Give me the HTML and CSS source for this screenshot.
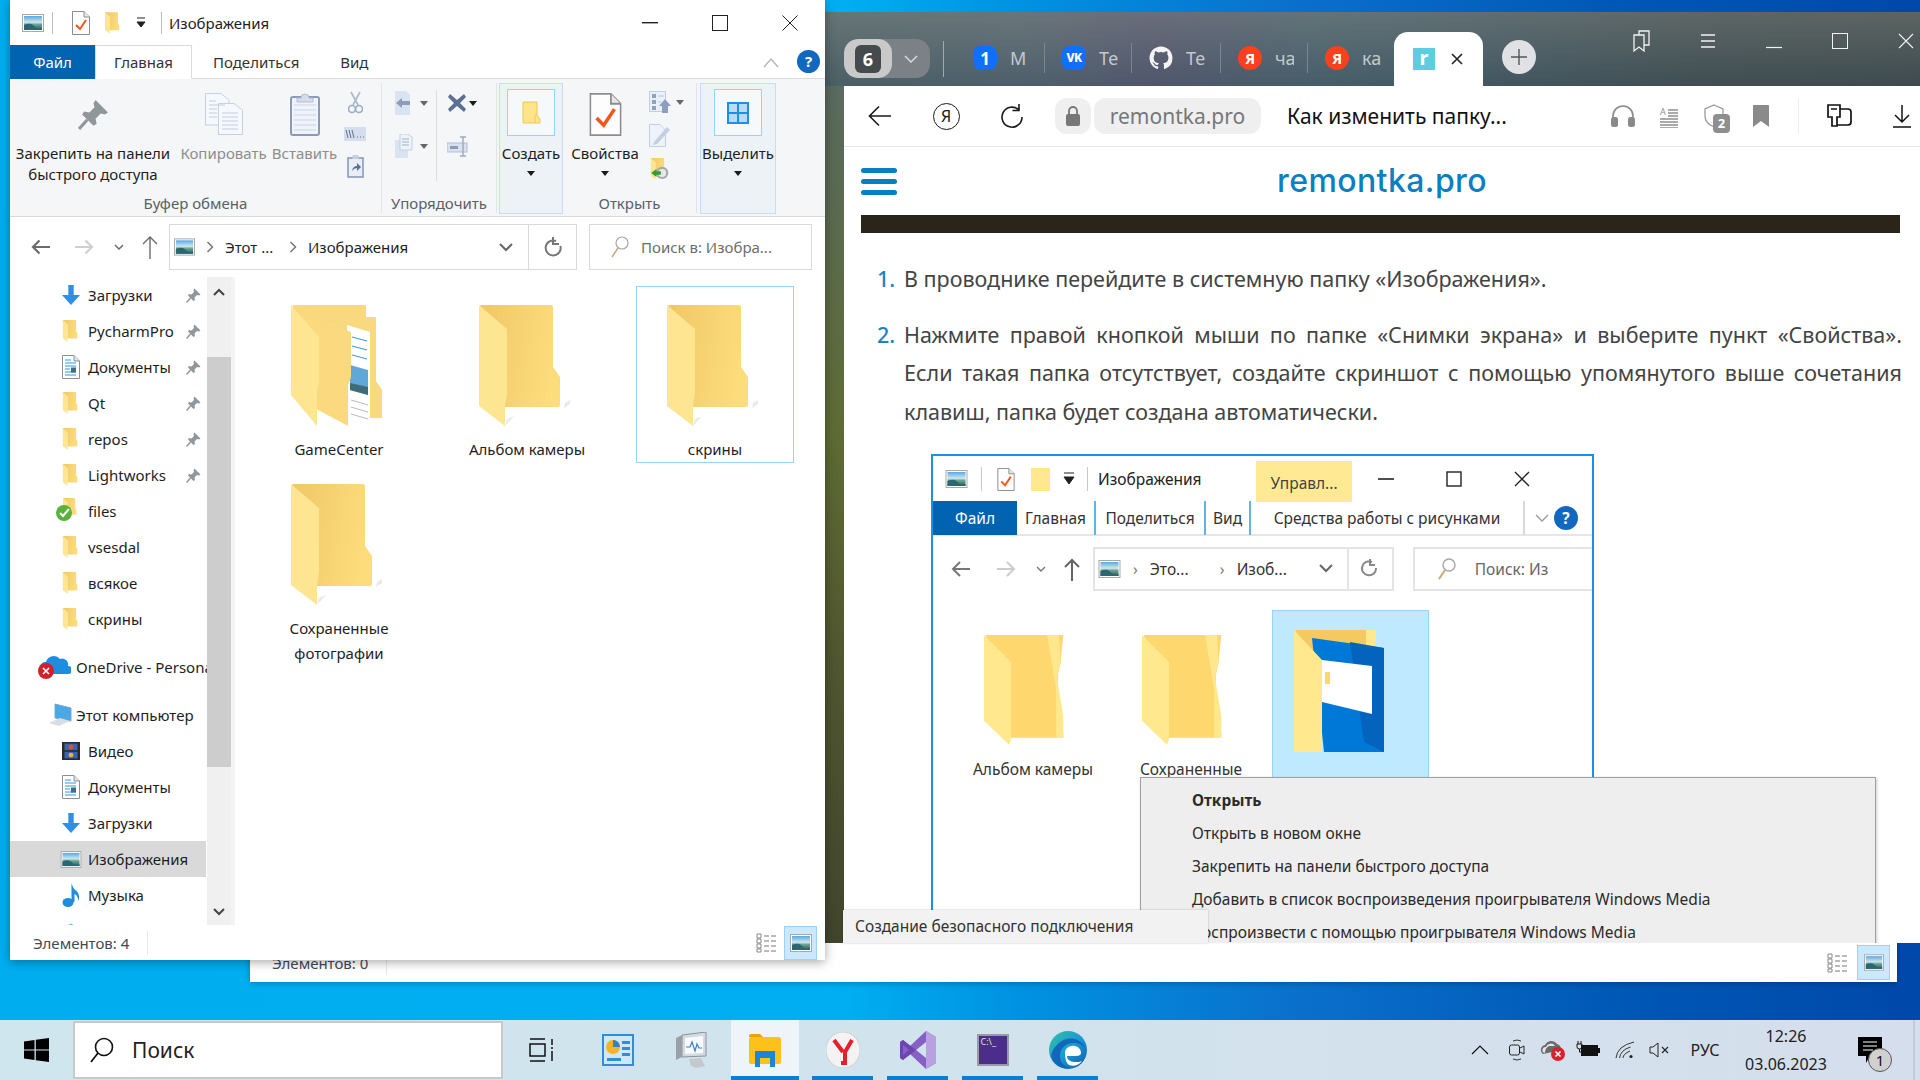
FILE: index.html
```html
<!DOCTYPE html>
<html lang="ru">
<head>
<meta charset="utf-8">
<title>Изображения</title>
<link rel="stylesheet" href="styles.css">
</head>
<body>
<svg class="defs" width="0" height="0" aria-hidden="true">
  <defs>
    <linearGradient id="gback" x1="0" y1="0" x2="1" y2="0.2"><stop offset="0" stop-color="#efc766"/><stop offset="1" stop-color="#fddc7c"/></linearGradient>
    <linearGradient id="gpic" x1="0" y1="0" x2="0" y2="1"><stop offset="0" stop-color="#5aa9e2"/><stop offset=".45" stop-color="#cfe6ee"/><stop offset=".6" stop-color="#6fa58f"/><stop offset="1" stop-color="#1f5a6b"/></linearGradient>
    <linearGradient id="gedge" x1="0" y1="0" x2="1" y2="1"><stop offset="0" stop-color="#2fc5a0"/><stop offset=".5" stop-color="#1c9ad6"/><stop offset="1" stop-color="#0c5ba8"/></linearGradient>
    <symbol id="fold" viewBox="0 0 91 122">
      <path d="M86 98l5-3v4l-6 4zM28 114l7-3-9 10z" fill="#e9e9e9"/>
      <path d="M2 0H72q2 0 2 2V62l7 10v28q0 2-2 2H26V60L0 2z" fill="url(#gback)"/>
      <path d="M0 0L28 24V88Q27 94 26 102V121L0 101z" fill="#fee591"/>
    </symbol>
    <symbol id="folddocs" viewBox="0 0 91 122">
      <path d="M2 0H74q1 0 1 2V12H84q1 0 1 2V76l6 9v28H70L2 40z" fill="#f8d97f"/>
      <path d="M56 20L79 27V119L56 112z" fill="#fff"/>
      <path d="M61 32L76 36M61 41L76 45M61 50L76 54" stroke="#3fa2dc" stroke-width="1.2"/>
      <path d="M59 60L77 65V90L59 85z" fill="#5fa8d8"/>
      <path d="M59 78L77 82V90L59 85z" fill="#3e6d78"/>
      <path d="M60 95L77 100M60 102L77 107M60 109L77 114" stroke="#bbb"/>
      <path d="M14 8L60 27V72L57 80V121L14 98z" fill="#fad97f"/>
      <path d="M0 0L28 32V78L26 85V121L0 90z" fill="#fee591"/>
    </symbol>
    <symbol id="pic" viewBox="0 0 22 18">
      <rect x=".5" y=".5" width="21" height="17" fill="#fff" stroke="#a8a8a8"/>
      <rect x="2" y="2" width="18" height="14" fill="url(#gpic)"/>
      <path d="M2 11Q9 8 12 12T20 14V16H2z" fill="#2c6670"/>
    </symbol>
    <symbol id="docs" viewBox="0 0 18 24">
      <path d="M.5.5H12L17.5 6V23.5H.5z" fill="#fff" stroke="#8f8f8f"/>
      <path d="M12 .5V6H17.5" fill="#dbe6f2" stroke="#8f8f8f"/>
      <path d="M3 5H9M3 8H14M3 11H14M3 14H8M3 17H14M3 20H14" stroke="#2e9ce0" stroke-width="1.2"/>
      <rect x="9" y="12.5" width="5" height="5" fill="#3d6d88"/>
    </symbol>
    <symbol id="pin" viewBox="0 0 30 30">
      <path d="M17 1L29 13 26 15 22 14 17 19 18 24 15 26 4 15 6 12 11 13 16 8 15 4z" fill="#8f979b"/>
      <path d="M9 20L1 29" stroke="#8f979b" stroke-width="3"/>
    </symbol>
    <symbol id="down" viewBox="0 0 20 22">
      <path d="M7 0H13V11H20L10 22 0 11H7z" fill="#2e8fe6"/>
    </symbol>
    <symbol id="chk" viewBox="0 0 18 24">
      <path d="M.5.5H12L17.5 6V23.5H.5z" fill="#fdfdfd" stroke="#8d8d8d"/>
      <path d="M12 .5V6H17.5" fill="#e8e8e8" stroke="#8d8d8d"/>
      <path d="M4 14L8 18 14 9" fill="none" stroke="#f0581b" stroke-width="2"/>
    </symbol>
    <symbol id="flat" viewBox="0 0 91 122">
      <path d="M2 0H88L85 30 82 45V92L88 108V114H30z" fill="#ffd76f"/>
      <path d="M70 0H83L85 30 81 47 88 90V114H80V60z" fill="#ffe78e"/>
      <path d="M0 0L30 30V115L28 122 0 95z" fill="#ffe88d"/>
    </symbol>
  </defs>
</svg>

<div class="screen">
  <main class="desk">

    <section class="win-back">
      <div class="back-status">
        <span class="stat-text">Элементов: 0</span>
        <span class="stat-sep"></span>
        <span class="view-plain"><svg width="22" height="20" viewBox="0 0 22 20"><path d="M1 1h4v4H1zM1 6h4v4H1zM1 11h4v4H1zM1 16h4v3H1z" fill="#fff" stroke="#888"/><path d="M8 3h5M15 3h5M8 8h5M15 8h5M8 13h5M15 13h5M8 18h5M15 18h5" stroke="#777"/></svg></span>
        <span class="view-on"><svg width="20" height="17"><use href="#pic"/></svg></span>
      </div>
    </section>

    <section class="browser">
      <header class="strip">
        <div class="grp">
          <span class="grp-a"><span class="grp-num">6</span></span>
          <span class="grp-b"><svg width="14" height="8" viewBox="0 0 14 8"><path d="M1 1l6 6 6-6" fill="none" stroke="#d7dadc" stroke-width="1.5"/></svg></span>
        </div>
        <span class="strip-sep"></span>
        <div class="tab tab-first"><span class="fav fav-blue">1</span><span class="tab-t">М</span></div>
        <div class="tab"><span class="fav fav-blue fav-vk">VK</span><span class="tab-t">Те</span></div>
        <div class="tab"><svg class="fav" viewBox="0 0 24 24"><path fill="#f4f4f4" d="M12 .5C5.65.5.5 5.65.5 12c0 5.08 3.29 9.39 7.86 10.91.58.11.79-.25.79-.56v-2.14c-3.2.7-3.87-1.37-3.87-1.37-.52-1.33-1.28-1.68-1.28-1.68-1.05-.72.08-.7.08-.7 1.16.08 1.77 1.19 1.77 1.19 1.03 1.76 2.7 1.25 3.36.96.1-.75.4-1.25.73-1.54-2.55-.29-5.24-1.28-5.24-5.69 0-1.26.45-2.28 1.19-3.09-.12-.29-.52-1.46.11-3.05 0 0 .97-.31 3.17 1.18a11 11 0 0 1 5.77 0c2.2-1.49 3.17-1.18 3.17-1.18.63 1.59.23 2.76.11 3.05.74.81 1.19 1.83 1.19 3.09 0 4.42-2.69 5.39-5.25 5.68.41.36.78 1.06.78 2.14v3.17c0 .31.21.67.8.56A11.5 11.5 0 0 0 23.5 12C23.5 5.65 18.35.5 12 .5z"/></svg><span class="tab-t">Те</span></div>
        <div class="tab"><span class="fav fav-ya">Я</span><span class="tab-t">ча</span></div>
        <div class="tab"><span class="fav fav-ya">Я</span><span class="tab-t">ка</span></div>
        <div class="tab-on">
          <span class="fav-r">r</span>
          <svg class="tab-x" width="12" height="12" viewBox="0 0 12 12"><path d="M1 1l10 10M11 1L1 11" stroke="#222" stroke-width="1.6"/></svg>
        </div>
        <span class="newtab"><svg width="18" height="18" viewBox="0 0 18 18"><path d="M9 1v16M1 9h16" stroke="#555" stroke-width="1.4"/></svg></span>
        <div class="wctl">
          <span class="wc"><svg width="20" height="24" viewBox="0 0 20 24"><path d="M2 6h10v16l-5-4-5 4zM7 6V2h10v14h-5" fill="none" stroke="#f2f2f2" stroke-width="1.3"/></svg></span>
          <span class="wc"><svg width="18" height="14" viewBox="0 0 18 14"><path d="M2 1h14M2 7h14M2 13h14" stroke="#f2f2f2" stroke-width="1.3"/></svg></span>
          <span class="wc"><svg width="16" height="16" viewBox="0 0 16 16"><path d="M0 14.5h16" stroke="#f2f2f2" stroke-width="1.2"/></svg></span>
          <span class="wc"><svg width="16" height="16" viewBox="0 0 16 16"><rect x=".5" y=".5" width="15" height="15" fill="none" stroke="#f2f2f2"/></svg></span>
          <span class="wc wc-x"><svg width="16" height="16" viewBox="0 0 16 16"><path d="M1 1l14 14M15 1L1 15" stroke="#f2f2f2" stroke-width="1.1"/></svg></span>
        </div>
      </header>

      <div class="bpanel">
        <nav class="toolbar">
          <span class="tbtn tbtn-first"><svg width="24" height="22" viewBox="0 0 24 22"><path d="M23 11H2M11 1.5L1.5 11l9.5 9.5" fill="none" stroke="#1a1a1a" stroke-width="1.6"/></svg></span>
          <span class="tbtn"><span class="ya-ring">Я</span></span>
          <span class="tbtn"><svg width="24" height="26" viewBox="0 0 24 26"><path d="M19 7A10 10 0 1 0 22 14M19 1v6.5h-6.5" fill="none" stroke="#1a1a1a" stroke-width="1.6"/></svg></span>
          <span class="lockpill"><svg width="16" height="20" viewBox="0 0 16 20"><rect x="1" y="8" width="14" height="12" rx="2" fill="#777"/><path d="M4 9V5a4 4 0 0 1 8 0v4" fill="none" stroke="#777" stroke-width="1.8"/></svg></span>
          <span class="addrpill">remontka.pro</span>
          <span class="ptitle">Как изменить папку...</span>
          <div class="tright">
            <span class="ti"><svg width="26" height="24" viewBox="0 0 26 24"><path d="M3 14V12a10 10 0 0 1 20 0v2" fill="none" stroke="#8a8a8a" stroke-width="1.6"/><rect x="1" y="13" width="7" height="10" rx="2.5" fill="#8a8a8a"/><rect x="18" y="13" width="7" height="10" rx="2.5" fill="#8a8a8a"/></svg></span>
            <span class="ti"><svg width="20" height="24" viewBox="0 0 20 24"><path d="M9 12H19M9 9H19M9 6H19M1 15H19M1 18H19M1 21H19M1 24H19" stroke="#8f8f8f" stroke-width="1.4"/><text x="1" y="11" class="ti-a">A</text></svg></span>
            <span class="ti ti-shield"><svg width="22" height="24" viewBox="0 0 22 24"><path d="M10 1l9 4v7c0 5-4 9-9 11-5-2-9-6-9-11V5z" fill="#fff" stroke="#999" stroke-width="1.3"/></svg><span class="shield-n">2</span></span>
            <span class="ti"><svg width="16" height="22" viewBox="0 0 16 22"><path d="M0 1q0-1 1-1h14q1 0 1 1v21l-8-6-8 6z" fill="#8a8a8a"/></svg></span>
            <span class="tsep"></span>
            <span class="ti ti-ext"><svg width="28" height="26" viewBox="0 0 28 26"><path d="M2 2h12v12h-3v9h-5v-9H2zM14 6h8q3 0 3 3v10q0 3-3 3h-11" fill="#fff" stroke="#111" stroke-width="1.7"/><path d="M5 6h6" stroke="#111" stroke-width="1.5"/></svg></span>
            <span class="ti ti-dl"><svg width="20" height="24" viewBox="0 0 20 24"><path d="M10 1V18M3 11l7 7 7-7M1 23h18" fill="none" stroke="#111" stroke-width="1.5"/></svg></span>
          </div>
        </nav>

        <div class="page">
          <header class="sitehead">
            <span class="burger"><i></i><i></i><i></i></span>
            <span class="logo">remontka.pro</span>
          </header>
          <div class="darkbar"></div>
          <article class="article">
            <div class="li"><span class="num">1.</span><p>В проводнике перейдите в системную папку «Изображения».</p></div>
            <div class="li li-2"><span class="num">2.</span><p>Нажмите правой кнопкой мыши по папке «Снимки экрана» и выберите пункт «Свойства». Если такая папка отсутствует, создайте скриншот с помощью упомянутого выше сочетания клавиш, папка будет создана автоматически.</p></div>

            <figure class="shot">
              <div class="s-title">
                <svg class="s-pic" width="23" height="18"><use href="#pic"/></svg>
                <span class="s-sep"></span>
                <svg class="s-chk" width="18" height="23"><use href="#chk"/></svg>
                <svg class="s-fold" width="19" height="23" viewBox="0 0 19 23"><path d="M0 0H19V23H0z" fill="#ffe88d"/></svg>
                <svg class="s-car" width="12" height="14" viewBox="0 0 12 14"><path d="M1 1h10M1 5h10l-5 7z" fill="#222" stroke="#222"/></svg>
                <span class="s-sep s-sep2"></span>
                <span class="s-name">Изображения</span>
                <span class="s-manage">Управл...</span>
                <span class="s-ctl"><svg width="16" height="16" viewBox="0 0 16 16"><path d="M0 8h16" stroke="#222" stroke-width="1.6"/></svg></span>
                <span class="s-ctl"><svg width="16" height="16" viewBox="0 0 16 16"><rect x="1" y="1" width="14" height="14" fill="none" stroke="#222" stroke-width="1.4"/></svg></span>
                <span class="s-ctl"><svg width="16" height="16" viewBox="0 0 16 16"><path d="M1 1l14 14M15 1L1 15" stroke="#222" stroke-width="1.4"/></svg></span>
              </div>
              <div class="s-tabs">
                <span class="s-file">Файл</span>
                <span class="s-tab s-t1">Главная</span>
                <span class="s-tab s-t2">Поделиться</span>
                <span class="s-tab s-t3">Вид</span>
                <span class="s-tab s-t4">Средства работы с рисунками</span>
                <svg class="s-chev" width="14" height="8" viewBox="0 0 14 8"><path d="M1 1l6 6 6-6" fill="none" stroke="#999" stroke-width="1.3"/></svg>
                <span class="s-help">?</span>
              </div>
              <div class="s-nav">
                <svg class="s-arr" width="20" height="16" viewBox="0 0 20 16"><path d="M19 8H3M9 1L2 8l7 7" fill="none" stroke="#777" stroke-width="2"/></svg>
                <svg class="s-arr s-fw" width="20" height="16" viewBox="0 0 20 16"><path d="M1 8h16M11 1l7 7-7 7" fill="none" stroke="#ccc" stroke-width="2"/></svg>
                <svg class="s-drop" width="10" height="6" viewBox="0 0 10 6"><path d="M1 1l4 4 4-4" fill="none" stroke="#777" stroke-width="1.4"/></svg>
                <svg class="s-up" width="18" height="24" viewBox="0 0 18 24"><path d="M9 24V3M2 10l7-7 7 7" fill="none" stroke="#666" stroke-width="2"/></svg>
                <div class="s-addr">
                  <svg class="s-apic" width="23" height="18"><use href="#pic"/></svg>
                  <span class="s-gt">›</span><span class="s-cr">Это...</span><span class="s-gt">›</span><span class="s-cr">Изоб...</span>
                  <svg class="s-adrop" width="14" height="9" viewBox="0 0 14 9"><path d="M1 1l6 6 6-6" fill="none" stroke="#666" stroke-width="2"/></svg>
                  <span class="s-ref"><svg width="18" height="20" viewBox="0 0 18 20"><path d="M11 3A7 7 0 1 0 15 9M9 0v6h5" fill="none" stroke="#888" stroke-width="2"/></svg></span>
                </div>
                <div class="s-search">
                  <svg width="20" height="24" viewBox="0 0 20 24"><circle cx="12" cy="8" r="6" fill="none" stroke="#a7a7a7" stroke-width="1.4"/><path d="M8 13L2 22" stroke="#c9a877" stroke-width="2"/></svg>
                  <span>Поиск: Из</span>
                </div>
              </div>
              <div class="s-files">
                <div class="s-tile"><svg width="82" height="122"><use href="#flat"/></svg><span>Альбом камеры</span></div>
                <div class="s-tile"><svg width="82" height="122"><use href="#flat"/></svg><span>Сохраненные</span></div>
                <div class="s-tile s-tile-sel">
                  <svg width="92" height="122" viewBox="0 0 92 122">
                    <path d="M2 0H72V30H2z" fill="#f4c95f"/><path d="M72 0H82V40H72z" fill="#ffe88d"/>
                    <path d="M18 8L90 18V122H30z" fill="#0078d7"/><path d="M56 12L90 18V122L70 112z" fill="#0463bc"/>
                    <path d="M28 30L78 36V84L28 72z" fill="#fff"/>
                    <rect x="31" y="42" width="5" height="12" fill="#ffd76f"/>
                    <path d="M0 0L28 30V122H0z" fill="#ffe88d"/>
                  </svg>
                </div>
              </div>
            </figure>
          </article>

          <div class="ctx">
            <div class="ctx-i ctx-b">Открыть</div>
            <div class="ctx-i">Открыть в новом окне</div>
            <div class="ctx-i">Закрепить на панели быстрого доступа</div>
            <div class="ctx-i">Добавить в список воспроизведения проигрывателя Windows Media</div>
            <div class="ctx-i">Воспроизвести с помощью проигрывателя Windows Media</div>
            <div class="ctx-i ctx-more">Передать на устройство<svg width="12" height="20" viewBox="0 0 12 20"><path d="M2 1l8 9-8 9" fill="none" stroke="#2a6db0" stroke-width="1.6"/></svg></div>
            <div class="ctx-i">Проверка с использованием Microsoft Defender...</div>
          </div>
        </div>
      </div>
      <div class="tip">Создание безопасного подключения</div>
    </section>

    <section class="explorer">
      <div class="x-title">
        <svg class="x-pic" width="22" height="18"><use href="#pic"/></svg>
        <span class="x-sep"></span>
        <svg class="x-chk" width="18" height="24"><use href="#chk"/></svg>
        <svg class="x-fold" width="16" height="22"><use href="#fold"/></svg>
        <svg class="x-car" width="10" height="12" viewBox="0 0 10 12"><path d="M1 1h8M1 5h8L5 10z" fill="#222" stroke="#222"/></svg>
        <span class="x-sep x-sep2"></span>
        <span class="x-name">Изображения</span>
        <span class="x-ctl x-min"><svg width="16" height="2"><rect width="16" height="1.4" fill="#222"/></svg></span>
        <span class="x-ctl x-max"><svg width="16" height="16" viewBox="0 0 16 16"><rect x=".5" y=".5" width="15" height="15" fill="none" stroke="#222"/></svg></span>
        <span class="x-ctl x-cls"><svg width="16" height="16" viewBox="0 0 16 16"><path d="M.5.5l15 15M15.5.5l-15 15" stroke="#222"/></svg></span>
      </div>
      <div class="x-tabs">
        <span class="x-file">Файл</span>
        <span class="x-home">Главная</span>
        <span class="x-tab x-share">Поделиться</span>
        <span class="x-tab x-view">Вид</span>
        <svg class="x-fold-up" width="16" height="10" viewBox="0 0 16 10"><path d="M1 9l7-8 7 8" fill="none" stroke="#b4b4b4" stroke-width="1.3"/></svg>
        <span class="x-help">?</span>
      </div>

      <div class="ribbon">
        <section class="rg rg-clip">
          <div class="rbody">
            <div class="rbtn rb-pin"><div class="ric"><svg width="31" height="31"><use href="#pin"/></svg></div><span>Закрепить на панели<br>быстрого доступа</span></div>
            <div class="rbtn rb-copy dim"><div class="ric"><svg width="38" height="42" viewBox="0 0 38 42"><g fill="#f5f8fc" stroke="#c5d0e2"><path d="M.5.5H16L24 7V32H.5z"/><path d="M13.5 10.5H29L37.5 17V41.5H13.5z"/></g><path d="M4 8H11M4 12H20M4 16H12M4 20H12M4 24H12M17 20H33M17 24H33M17 28H33M17 32H33M17 36H33" stroke="#c2cee2"/></svg></div><span>Копировать</span></div>
            <div class="rbtn rb-paste dim"><div class="ric"><svg width="30" height="43" viewBox="0 0 30 43"><rect x="1" y="4" width="28" height="38" rx="2" fill="#f0f4fa" stroke="#8a9bba" stroke-width="2"/><path d="M4 12H26M4 17H26M4 22H26M4 27H26M4 32H26M4 37H26" stroke="#c7d3e7"/><path d="M11 5q0-4 4-4t4 4h4v4H7V5z" fill="#d5dde9" stroke="#b2bdd0"/></svg></div><span>Вставить</span></div>
            <div class="rsmall rs-clip">
              <span><svg width="15" height="23" viewBox="0 0 15 23"><path d="M3 1l7 13M12 1L5 14" stroke="#aab6cc" stroke-width="1.6"/><circle cx="4" cy="18" r="3.5" fill="none" stroke="#9eacc5" stroke-width="1.7"/><circle cx="11" cy="18" r="3.5" fill="none" stroke="#9eacc5" stroke-width="1.7"/></svg></span>
              <span><svg width="22" height="14" viewBox="0 0 22 14"><rect width="22" height="14" fill="#d4deec"/><path d="M2 3l2 8M5 3l2 8M8 3l2 8" stroke="#62708a"/><path d="M13 10h1M16 10h1M19 10h1" stroke="#62708a"/></svg></span>
              <span><svg width="17" height="23" viewBox="0 0 17 23"><rect x="1" y="3" width="15" height="19" fill="#e8edf6" stroke="#8a9bba" stroke-width="1.6"/><rect x="5.5" y="0" width="6" height="4" fill="#c5cfe0"/><path d="M5 16q1-5 5-5V8l4 4-4 4v-3q-3 0-5 3z" fill="#5a6f94"/></svg></span>
            </div>
          </div>
          <div class="rlabel">Буфер обмена</div>
        </section>

        <section class="rg rg-org">
          <div class="rbody org">
            <div class="org-col">
              <span><svg width="24" height="24" viewBox="0 0 24 24"><path d="M1 0H12L16 4V24H1z" fill="#d9e3f1"/><path d="M8 12l-6 0M2 12l6-5v3h8v4H8v3z" fill="#8c9cb9"/></svg><i class="car gc"></i></span>
              <span><svg width="24" height="24" viewBox="0 0 24 24"><path d="M1 6H14V24H1z" fill="#d9e3f1"/><path d="M6 0H14L18 3V16H6z" fill="#eef3fa" stroke="#c2cee2"/><path d="M8 5h7M8 8h7M8 11h7" stroke="#9fb0ca"/></svg><i class="car gc"></i></span>
            </div>
            <span class="org-sep"></span>
            <div class="org-col">
              <span><svg width="20" height="20" viewBox="0 0 20 20"><path d="M3 1l7 6 7-6 2 3-6 6 6 6-2 3-7-6-7 6-2-3 6-6-6-6z" fill="#5d7092"/></svg><i class="car dk"></i></span>
              <span><svg width="22" height="21" viewBox="0 0 22 21"><rect x="0" y="7" width="20" height="9" fill="#d7e1ef" stroke="#b3c0d6"/><rect x="3" y="10" width="8" height="3" fill="#8c9cb9"/><path d="M16 1v19M13 1h6M13 20h6" stroke="#9aaac3" stroke-width="1.4"/></svg></span>
            </div>
          </div>
          <div class="rlabel">Упорядочить</div>
        </section>

        <section class="rg-hi rg-new">
          <div class="hi-box"><svg width="19" height="23" viewBox="0 0 19 23"><path d="M1 1H15V14l3 4v4H1z" fill="#ffe48d" stroke="#f0c750"/><path d="M15 14H13V22" fill="none" stroke="#f0c750"/></svg></div>
          <span>Создать</span>
          <i class="car dk car-b"></i>
        </section>

        <section class="rg rg-open">
          <div class="rbody">
            <div class="rbtn rb-prop"><div class="ric"><svg width="33" height="43" viewBox="0 0 18 24"><use href="#chk"/></svg></div><span>Свойства</span><i class="car dk car-b"></i></div>
            <div class="rsmall rs-open">
              <span><svg width="22" height="23" viewBox="0 0 22 23"><rect x=".5" y=".5" width="16" height="20" fill="#eaf0f8" stroke="#c2cee2"/><path d="M3 3h4v4H3zM3 9h4v4H3zM3 15h4v4H3z" fill="#8fa2c0"/><path d="M9 5h6M9 11h3" stroke="#b8c5db"/><path d="M16 8l6 7h-3v7h-6v-7h-3z" fill="#8c9fc0"/></svg><i class="car gc"></i></span>
              <span><svg width="22" height="23" viewBox="0 0 22 23"><path d="M.5.5H11L16.5 6V22.5H.5z" fill="#eef3fa" stroke="#c2cee2"/><path d="M5 18L18 3l3 3L8 20l-4 1z" fill="#c3cfe2"/></svg></span>
              <span><svg width="20" height="22" viewBox="0 0 91 100"><use href="#fold"/><circle cx="60" cy="68" r="28" fill="#aaa"/><circle cx="60" cy="68" r="18" fill="#e8e8e8"/><path d="M10 68l24-18v10h20v16H34v10z" fill="#2f9e34"/></svg></span>
            </div>
          </div>
          <div class="rlabel">Открыть</div>
        </section>

        <section class="rg-hi rg-sel">
          <div class="hi-box"><svg width="22" height="22" viewBox="0 0 22 22"><path d="M0 0H22V22H0z" fill="#1e8ee6"/><path d="M2 2H10V10H2zM12 2H20V10H12zM2 12H10V20H2zM12 12H20V20H12z" fill="#b8dcf8"/></svg></div>
          <span>Выделить</span>
          <i class="car dk car-b"></i>
        </section>
      </div>

      <div class="x-nav">
        <svg class="nav-b" width="20" height="16" viewBox="0 0 20 16"><path d="M20 8H4M9.5 1.5L3 8l6.5 6.5" fill="none" stroke="#6b6b6b" stroke-width="2.2"/></svg>
        <svg class="nav-f" width="20" height="16" viewBox="0 0 20 16"><path d="M0 8h16M10.5 1.5L17 8l-6.5 6.5" fill="none" stroke="#cfcfcf" stroke-width="2.2"/></svg>
        <svg class="nav-d" width="10" height="6" viewBox="0 0 10 6"><path d="M1 1l4 4 4-4" fill="none" stroke="#6b6b6b" stroke-width="1.5"/></svg>
        <svg class="nav-u" width="18" height="24" viewBox="0 0 18 24"><path d="M9 24V2M2 9l7-7 7 7" fill="none" stroke="#6b6b6b" stroke-width="1.4"/></svg>
        <div class="addr">
          <svg class="a-pic" width="21" height="18"><use href="#pic"/></svg>
          <svg class="a-gt" width="8" height="12" viewBox="0 0 8 12"><path d="M1.5 1l5 5-5 5" fill="none" stroke="#777" stroke-width="1.5"/></svg>
          <span class="a-cr a-c1">Этот ...</span>
          <svg class="a-gt" width="8" height="12" viewBox="0 0 8 12"><path d="M1.5 1l5 5-5 5" fill="none" stroke="#777" stroke-width="1.5"/></svg>
          <span class="a-cr">Изображения</span>
          <svg class="a-dd" width="14" height="9" viewBox="0 0 14 9"><path d="M1 1l6 6 6-6" fill="none" stroke="#666" stroke-width="2"/></svg>
          <span class="a-ref"><svg width="18" height="22" viewBox="0 0 18 22"><path d="M12 5A7.5 7.5 0 1 0 16.4 10M9 1v7h6" fill="none" stroke="#777" stroke-width="2"/></svg></span>
        </div>
        <div class="srch">
          <svg width="18" height="24" viewBox="0 0 18 24"><circle cx="11" cy="8" r="6" fill="none" stroke="#a7a7a7" stroke-width="1.2"/><path d="M7 13L1 22" stroke="#c9a877" stroke-width="1.5"/></svg>
          <span>Поиск в: Изобра...</span>
        </div>
      </div>

      <div class="x-body">
        <aside class="side">
          <div class="nrow"><svg class="ni" width="18" height="20"><use href="#down"/></svg><span>Загрузки</span><svg class="npin" width="15" height="15"><use href="#pin"/></svg></div>
          <div class="nrow"><svg class="ni" width="16" height="22"><use href="#fold"/></svg><span>PycharmPro</span><svg class="npin" width="15" height="15"><use href="#pin"/></svg></div>
          <div class="nrow"><svg class="ni" width="18" height="24"><use href="#docs"/></svg><span>Документы</span><svg class="npin" width="15" height="15"><use href="#pin"/></svg></div>
          <div class="nrow"><svg class="ni" width="16" height="22"><use href="#fold"/></svg><span>Qt</span><svg class="npin" width="15" height="15"><use href="#pin"/></svg></div>
          <div class="nrow"><svg class="ni" width="16" height="22"><use href="#fold"/></svg><span>repos</span><svg class="npin" width="15" height="15"><use href="#pin"/></svg></div>
          <div class="nrow"><svg class="ni" width="16" height="22"><use href="#fold"/></svg><span>Lightworks</span><svg class="npin" width="15" height="15"><use href="#pin"/></svg></div>
          <div class="nrow"><svg class="ni ni-ok" width="24" height="26" viewBox="0 0 24 26"><use href="#fold" x="7" width="15" height="20"/><circle cx="8" cy="15" r="8" fill="#57b33a"/><path d="M4 15l3 3 6-7" fill="none" stroke="#fff" stroke-width="2"/></svg><span>files</span></div>
          <div class="nrow"><svg class="ni" width="16" height="22"><use href="#fold"/></svg><span>vsesdal</span></div>
          <div class="nrow"><svg class="ni" width="16" height="22"><use href="#fold"/></svg><span>всякое</span></div>
          <div class="nrow"><svg class="ni" width="16" height="22"><use href="#fold"/></svg><span>скрины</span></div>
          <div class="nrow nrow-od"><svg class="ni" width="34" height="26" viewBox="0 0 34 26"><path d="M8 20a6 6 0 0 1 1-12 8 8 0 0 1 14-3 6 6 0 0 1 8 7 4 4 0 0 1 0 8z" fill="#1e8de0"/><circle cx="9" cy="17" r="8" fill="#d5202c"/><path d="M6 14l6 6M12 14l-6 6" stroke="#fff" stroke-width="1.6"/></svg><span>OneDrive - Personal</span></div>
          <div class="nrow nrow-pc"><svg class="ni" width="24" height="24" viewBox="0 0 24 24"><path d="M7 1l16 4v13L7 15z" fill="#4aa8e6" stroke="#7ba6c9"/><path d="M1 20l11-5 10 3-11 5z" fill="#d7dde3"/></svg><span>Этот компьютер</span></div>
          <div class="nrow"><svg class="ni" width="22" height="22" viewBox="0 0 22 22"><rect width="22" height="22" fill="#2b2b2b"/><rect x="3" y="2" width="16" height="8" fill="#3c62b8"/><rect x="3" y="12" width="16" height="8" fill="#3c62b8"/><circle cx="11" cy="6" r="3" fill="#d9532c"/><circle cx="11" cy="16" r="3" fill="#e8b23a"/></svg><span>Видео</span></div>
          <div class="nrow"><svg class="ni" width="18" height="24"><use href="#docs"/></svg><span>Документы</span></div>
          <div class="nrow"><svg class="ni" width="18" height="20"><use href="#down"/></svg><span>Загрузки</span></div>
          <div class="nrow nrow-sel"><svg class="ni" width="22" height="17"><use href="#pic"/></svg><span>Изображения</span></div>
          <div class="nrow"><svg class="ni" width="18" height="24" viewBox="0 0 18 24"><ellipse cx="6" cy="19.5" rx="5.5" ry="4.5" fill="#1e8de0"/><path d="M9.5 19V0q1 5 5 8t2 10q-1-6-4-7V19z" fill="#1e8de0"/></svg><span>Музыка</span></div>
          <div class="nrow"><svg class="ni" width="24" height="24" viewBox="0 0 24 24"><path d="M12 2l11 6-11 6L1 8z" fill="#5cc6e0"/></svg><span>Объемные объекты</span></div>
        </aside>
        <div class="vbar">
          <div class="vb-top"><svg width="12" height="8" viewBox="0 0 12 8"><path d="M1 7l5-5 5 5" fill="none" stroke="#444" stroke-width="2"/></svg></div>
          <div class="vb-thumb"></div>
          <div class="vb-low"><svg width="12" height="8" viewBox="0 0 12 8"><path d="M1 1l5 5 5-5" fill="none" stroke="#444" stroke-width="2"/></svg></div>
        </div>
        <div class="splitter"></div>
        <div class="files">
          <div class="tile"><svg width="91" height="122"><use href="#folddocs"/></svg><span>GameCenter</span></div>
          <div class="tile"><svg width="91" height="122"><use href="#fold"/></svg><span>Альбом камеры</span></div>
          <div class="tile tile-sel"><svg width="91" height="122"><use href="#fold"/></svg><span>скрины</span></div>
          <div class="tile"><svg width="91" height="122"><use href="#fold"/></svg><span>Сохраненные фотографии</span></div>
        </div>
      </div>

      <footer class="x-stat">
        <span class="stat-text">Элементов: 4</span>
        <span class="stat-sep"></span>
        <span class="view-plain"><svg width="22" height="20" viewBox="0 0 22 20"><path d="M1 1h4v4H1zM1 6h4v4H1zM1 11h4v4H1zM1 16h4v3H1z" fill="#fff" stroke="#888"/><path d="M8 3h5M15 3h5M8 8h5M15 8h5M8 13h5M15 13h5M8 18h5M15 18h5" stroke="#777"/></svg></span>
        <span class="view-on"><svg width="22" height="18"><use href="#pic"/></svg></span>
      </footer>
    </section>
  </main>

  <footer class="taskbar">
    <span class="start"><svg width="25" height="24" viewBox="0 0 25 24"><path d="M0 3.4L10.5 2V11.4H0zM11.8 1.8L25 0V11.4H11.8zM0 12.6H10.5V22L0 20.6zM11.8 12.6H25V24L11.8 22.2z" fill="#000"/></svg></span>
    <div class="tsearch">
      <svg width="24" height="26" viewBox="0 0 24 26"><circle cx="14" cy="10" r="8.5" fill="none" stroke="#111" stroke-width="1.6"/><path d="M8 16L1 25" stroke="#111" stroke-width="1.8"/></svg>
      <span>Поиск</span>
    </div>
    <span class="taskview"><svg width="26" height="24" viewBox="0 0 26 24"><path d="M2 1h15M2 23h15M2 6h15v12H2zM24 1v6M24 9v2M24 13v10" fill="none" stroke="#111" stroke-width="1.5"/></svg></span>
    <div class="apps">
      <span class="app"><svg width="32" height="32" viewBox="0 0 32 32"><rect width="32" height="32" fill="#2e8fd6"/><rect x="2" y="2" width="28" height="28" fill="#cfe7f7"/><circle cx="11" cy="13" r="7" fill="#f5b32a"/><path d="M11 13V6a7 7 0 0 1 7 7z" fill="#3a7fc2"/><path d="M20 7h8v3h-8zM20 13h8v3h-8zM20 19h8v3h-8z" fill="#2e8fd6"/><path d="M5 24h14v3H5z" fill="#2e8fd6"/></svg></span>
      <span class="app"><svg width="34" height="36" viewBox="0 0 34 36"><path d="M6 3L30 0V24L6 25z" fill="#d5dae0" stroke="#8c929a"/><path d="M9 6L27 4V21L9 22z" fill="#f7fbfd"/><path d="M10 15l4 0 2-5 3 9 2-7 2 4 3 0" fill="none" stroke="#3b7fc4" stroke-width="1.2"/><path d="M0 6l6-3V25l-6 3z" fill="#9aa0a8"/><path d="M13 27l12-1 4 8-8 2-6-2z" fill="#c5c9ce"/></svg></span>
      <span class="app app-on"><svg width="32" height="33" viewBox="0 0 32 33"><path d="M0 2q0-2 2-2H11l3 3H0z" fill="#e6a40e"/><rect y="3" width="32" height="27" rx="2" fill="#fcc21a"/><path d="M6 17h20v16h-5V24H11v9H6z" fill="#1a86d8"/></svg></span>
      <span class="app"><svg width="34" height="36" viewBox="0 0 34 36"><ellipse cx="17" cy="18" rx="17" ry="18" fill="#f3f3f3" stroke="#d0d0d0"/><path d="M8 8l9 12M26 8l-7 12V31h-4" fill="none" stroke="#e3202c" stroke-width="4"/></svg></span>
      <span class="app"><svg width="36" height="38" viewBox="0 0 36 38"><path d="M26 0L36 6V32L26 38 10 23 3 29 0 27V11L3 9 10 15zM26 11L16 19 26 27z" fill="#8660c5"/><path d="M26 0L36 6V32L26 38z" fill="#b9a0e0"/><path d="M0 11L3 9 16 19 3 29 0 27zM3 14V24L9 19z" fill="#6d45b0"/></svg></span>
      <span class="app"><span class="term"><span>C:\_</span></span></span>
      <span class="app"><svg width="38" height="38" viewBox="0 0 38 38"><circle cx="19" cy="19" r="19" fill="url(#gedge)"/><path d="M37 22c0-6-5-10-12-10-9 0-14 6-14 13 0 6 4 11 11 12-8 2-18-3-20-12 3-13 15-19 23-17 7 1 12 7 12 14z" fill="#1367b8"/><path d="M16 22c0-5 5-8 10-7 4 1 6 4 6 7 0 2-2 3-5 3h-9c0 4 4 6 9 6 2 0 4 0 6-1-3 4-8 6-13 4-3-2-4-7-4-12z" fill="#fff"/></svg></span>
    </div>
    <div class="tray">
      <span class="tr tr-up"><svg width="18" height="10" viewBox="0 0 18 10"><path d="M1 9l8-8 8 8" fill="none" stroke="#111" stroke-width="1.2"/></svg></span>
      <span class="tr tr-cam"><svg width="16" height="22" viewBox="0 0 16 22"><path d="M4 2Q8 0 12 2M4 20q4 2 8 0" fill="none" stroke="#333"/><rect x=".5" y="6" width="10" height="10" rx="2" fill="none" stroke="#222"/><path d="M11 9l4-2v8l-4-2" fill="none" stroke="#222"/></svg></span>
      <span class="tr tr-cld"><svg width="26" height="22" viewBox="0 0 26 22"><path d="M3 15a5 5 0 0 1 2-9 7 7 0 0 1 12-1 6 6 0 0 1 4 6z" fill="#6a6a6a"/><path d="M5 14a3 3 0 0 1 1-6 5 5 0 0 1 9-1H9q-4 2-4 7z" fill="#e5e5e5"/><circle cx="18" cy="15" r="7" fill="#d9202c"/><path d="M15.500 12.500l5 5M20.500 12.500l-5 5" stroke="#fff" stroke-width="1.6"/></svg></span>
      <span class="tr tr-bat"><svg width="24" height="18" viewBox="0 0 24 18"><path d="M2 0v3M5 0v3M1 3h5v3q0 2-2.500 2T1 6zM3.500 8v3H6" fill="none" stroke="#111"/><rect x="5" y="4" width="17" height="11" fill="#111"/><rect x="22" y="7" width="2" height="5" fill="#111"/></svg></span>
      <span class="tr tr-wifi"><svg width="20" height="18" viewBox="0 0 20 18"><path d="M1 17Q2 5 19 1M4.500 17q1-8 11-11M8 17q0-4 7-7" fill="none" stroke="#333"/><circle cx="16" cy="15.500" r="1.600" fill="#222"/></svg></span>
      <span class="tr tr-snd"><svg width="22" height="16" viewBox="0 0 22 16"><path d="M1 5h3l5-4v14l-5-4H1z" fill="none" stroke="#222"/><path d="M13 5l6 6M19 5l-6 6" stroke="#222" stroke-width="1.1"/></svg></span>
      <span class="tr tr-lang">РУС</span>
      <span class="clock"><span>12:26</span><span>03.06.2023</span></span>
      <span class="tr tr-chat"><svg width="24" height="26" viewBox="0 0 24 26"><path d="M0 0H24V19H12L8 26V19H0z" fill="#000"/><path d="M5 5h14M5 9h14M5 13h10" stroke="#fff"/></svg><span class="badge">1</span></span>
      <span class="tr-end"></span>
    </div>
  </footer>
</div>
</body>
</html>
```

FILE: styles.css
```css
* { box-sizing: border-box; }
html, body { margin: 0; padding: 0; }
body {
  width: 1920px;
  height: 1080px;
  overflow: hidden;
  font-family: "Noto Sans", "Open Sans", "Liberation Sans", sans-serif;
  font-size: 15px;
  color: #1e1e1e;
}
svg { display: block; flex: none; }
.defs { position: absolute; }
i { font-style: normal; }

.screen { width: 1920px; height: 1080px; display: grid; grid-template-rows: 1fr 60px; }
.desk {
  position: relative;
  overflow: hidden;
  background: linear-gradient(90deg, #00aef0 0%, #00aef1 44%, #0092e2 53%, #0a6fcb 68%, #0058b6 84%, #0048aa 100%);
}

/* back explorer window */
.win-back {
  position: absolute;
  left: 250px;
  top: 800px;
  width: 1647px;
  height: 182px;
  background: #fff;
  box-shadow: 0 1px 6px rgba(0,0,0,.28);
  display: flex;
  align-items: flex-end;
}
.back-status { flex: 1; height: 39px; display: flex; align-items: center; padding-left: 22px; }
.back-status .view-plain { margin-left: auto; }
.back-status .view-on { margin-right: 7px; margin-left: 8px; height: 35px; }
.stat-text { color: #3f4a58; font-size: 15px; white-space: nowrap; }
.stat-sep { width: 1px; height: 24px; background: #e8e8e8; margin-left: 18px; }
.view-plain { width: 22px; height: 20px; }
.view-on { width: 33px; height: 34px; background: #cce8ff; border: 1px solid #99d1ff; display: flex; align-items: center; justify-content: center; }

/* browser */
.browser {
  position: absolute;
  left: 825px;
  top: 12px;
  width: 1095px;
  height: 931px;
  display: flex;
  flex-direction: column;
  background: linear-gradient(180deg, #5c6b6c 0%, #5a6a5a 12%, #5e6c34 45%, #50562f 70%, #42452d 100%);
}
.strip {
  height: 74px;
  flex: none;
  display: flex;
  padding: 27px 0 0 19px;
  background:
    linear-gradient(180deg, rgba(110,125,130,.55) 0%, rgba(50,80,100,.45) 100%),
    linear-gradient(90deg, #5e6b66 0%, #646c72 18%, #665a72 30%, #55686e 45%, #4f5c60 60%, #4a4c44 80%, #46463c 100%);
}
.grp { width: 86px; height: 39px; display: flex; border-radius: 14px; overflow: hidden; background: #7b8186; flex: none; }
.grp-a { width: 48px; background: #c9c9c9; border-radius: 14px; display: flex; align-items: center; justify-content: center; }
.grp-num {
  width: 26px; height: 28px; background: #454a4d; color: #fff; font-weight: 700; font-size: 18px; line-height: 28px;
  text-align: center; border-radius: 6px;
}
.grp-b { flex: 1; display: flex; align-items: center; justify-content: center; }
.strip-sep { width: 1px; height: 36px; margin: 2px 0 0 13px; background: #a4a8aa; flex: none; }
.tab {
  width: 87px;
  height: 30px;
  margin-top: 4px;
  display: flex;
  align-items: center;
  padding-left: 17px;
  border-left: 1px solid #7d868b;
  flex: none;
  overflow: hidden;
}
.tab:nth-of-type(4) { width: 89px; }
.tab-first { width: 100px; padding-left: 29px; border-left: none; }
.fav {
  width: 24px; height: 24px; flex: none; display: flex; align-items: center; justify-content: center;
  color: #fff; font-weight: 700; line-height: 1;
}
.fav-blue { background: #0f6fff; border-radius: 8px; font-size: 17px; }
.fav-vk { font-size: 12px; font-weight: 800; letter-spacing: -.5px; }
.fav-ya { background: #fc3f1d; border-radius: 50%; font-size: 15px; }
.tab-t { margin-left: 13px; color: #c4c9cc; font-size: 18px; white-space: nowrap; overflow: hidden; width: 19px; }
.tab-on {
  position: relative;
  margin-top: -7px;
  width: 89px;
  height: 54px;
  background: #fff;
  border-radius: 14px 14px 0 0;
  display: flex;
  align-items: center;
  padding: 0 0 0 19px;
  flex: none;
}
.fav-r {
  width: 22px; height: 22px; background: #5fcde0; color: #fff; font: 700 20px/20px "Noto Sans", sans-serif; text-align: center; flex: none;
}
.tab-x { margin-left: 16px; }
.newtab {
  width: 34px; height: 34px; border-radius: 50%; background: #dfe1e5; margin: 1px 0 0 19px; display: flex; align-items: center; justify-content: center; flex: none;
}
.wctl { margin-left: auto; margin-top: -10px; height: 24px; display: flex; flex: none; }
.wc { width: 66px; height: 24px; display: flex; align-items: center; justify-content: center; }
.wc-x { width: 47px; justify-content: flex-start; padding-left: 25px; }

.bpanel { flex: 1; min-height: 0; margin-left: 19px; background: #fff; display: flex; flex-direction: column; overflow: hidden; }
.toolbar { height: 61px; flex: none; border-bottom: 1px solid #e6e6e6; display: flex; align-items: center; background: #fff; }
.tbtn { width: 66px; height: 40px; display: flex; align-items: center; justify-content: center; flex: none; }
.tbtn-first { margin-left: 3px; }
.ya-ring {
  width: 27px; height: 27px; border: 1.5px solid #1a1a1a; border-radius: 50%; font-size: 16px; line-height: 24px; text-align: center; color: #1a1a1a;
}
.lockpill { width: 36px; height: 36px; margin-left: 10px; border-radius: 12px; background: #efefef; display: flex; align-items: center; justify-content: center; flex: none; }
.addrpill { width: 167px; height: 36px; margin-left: 3px; border-radius: 12px; background: #efefef; color: #777; font-size: 21px; line-height: 36px; text-align: center; flex: none; white-space: nowrap; }
.ptitle { margin-left: 26px; color: #111; font-size: 21px; white-space: nowrap; }
.tright { margin-left: auto; display: flex; align-items: center; width: 320px; flex: none; }
.ti { width: 46px; display: flex; justify-content: center; align-items: center; position: relative; flex: none; }
.ti-a { font: 9px "Noto Sans", sans-serif; fill: #8f8f8f; }
.shield-n {
  position: absolute; right: 8px; bottom: -5px; width: 17px; height: 19px; background: #8f8f8f; color: #fff; font-size: 13px; font-weight: 700; line-height: 19px;
  text-align: center; border-radius: 4px;
}
.tsep { width: 1px; height: 36px; background: #ececec; margin-left: 14px; flex: none; }
.ti-ext { width: 82px; }
.ti-dl { width: 39px; padding-left: 11px; justify-content: flex-start; }

.page { position: relative; flex: 1; min-height: 0; overflow: hidden; background: #fff; }
.sitehead { height: 68px; display: grid; grid-template-columns: 1fr auto 1fr; align-items: center; background: #fff; padding-left: 17px; }
.burger { width: 36px; display: flex; flex-direction: column; gap: 6px; }
.burger i { height: 5px; background: #0a7fc0; border-radius: 3px; }
.logo { color: #0b7fc1; font: 500 32px/1 "Inter", "Noto Sans", sans-serif; letter-spacing: .4px; padding-right: 17px; }
.darkbar { height: 18px; margin: 0 20px 0 17px; background: #2a2518; }
.article { padding: 27px 18px 0 33px; }
.li { display: flex; font-size: 21.5px; line-height: 38.5px; color: #444; }
.li p { margin: 0; flex: 1; text-align: justify; }
.li-2 { margin-top: 17px; }
.num { width: 27px; flex: none; color: #1c82c6; font-weight: 500; }

.shot {
  margin: 23px 0 0 54px;
  width: 663px;
  height: 600px;
  border: 2px solid #1e90e4;
  border-bottom: none;
  background: #fff;
  font-size: 15.5px;
  color: #222;
}
.s-title { height: 46px; display: flex; align-items: center; padding-left: 12px; }
.s-sep { width: 1px; height: 24px; background: #c9c9c9; margin-left: 13px; }
.s-chk { margin-left: 15px; }
.s-fold { margin-left: 16px; }
.s-car { margin-left: 13px; }
.s-sep2 { margin-left: 12px; }
.s-name { margin-left: 10px; width: 158px; white-space: nowrap; }
.s-manage { width: 96px; height: 41px; margin-top: 5px; background: #ffea93; text-align: center; line-height: 44px; color: #444; }
.s-ctl { width: 68px; display: flex; justify-content: center; }
.s-ctl:first-of-type { margin-left: 36px; }
.s-tabs { height: 34px; display: flex; align-items: center; border-bottom: 2px solid #e6e6e6; padding-right: 14px; }
.s-file { width: 84px; height: 34px; background: #0063b1; color: #fff; text-align: center; line-height: 34px; }
.s-tab { height: 34px; line-height: 34px; text-align: center; border-right: 2px solid #5fb4e8; white-space: nowrap; color: #333; }
.s-t1 { width: 79px; }
.s-t2 { width: 110px; }
.s-t3 { width: 45px; }
.s-t4 { width: 274px; border-right-color: #d9d9d9; }
.s-chev { margin-left: 10px; }
.s-help {
  margin-left: auto; width: 24px; height: 24px; border-radius: 50%; background: #1169bf; color: #fff; font-weight: 700; text-align: center; line-height: 24px;
}
.s-nav { height: 65px; display: flex; align-items: center; }
.s-arr { margin-left: 18px; }
.s-fw { margin-left: 25px; }
.s-drop { margin-left: 20px; }
.s-up { margin-left: 17px; }
.s-addr {
  width: 340px; height: 44px; margin-left: 12px; border: 2px solid #e4e4e4; display: flex; align-items: center; padding-left: 3px; white-space: nowrap; color: #333;
}
.s-gt { margin: 0 12px; color: #777; }
.s-gt:first-of-type { margin-left: 12px; }
.s-cr { width: 58px; }
.s-adrop { margin-left: auto; margin-right: 14px; }
.s-ref { width: 45px; height: 40px; border-left: 2px solid #e4e4e4; display: flex; align-items: center; justify-content: center; }
.s-search {
  width: 200px; height: 44px; margin-left: 19px; border: 2px solid #e4e4e4; border-right: none; display: flex; align-items: center; padding-left: 22px; gap: 18px; color: #666; white-space: nowrap; overflow: hidden;
}
.s-files { display: flex; padding: 9px 0 0 21px; }
.s-tile {
  width: 158px; padding-top: 19px; display: flex; flex-direction: column; align-items: center; white-space: nowrap; line-height: 22px; color: #333;
}
.s-tile svg { margin-right: 16px; }
.s-tile span { margin-top: 7px; }
.s-tile-sel { margin-left: 2px; width: 157px; height: 300px; background: #bfe9ff; border: 1px solid #99d1ff; }
.s-tile-sel svg { margin-right: 0; margin-left: -22px; }

.ctx {
  position: absolute;
  left: 296px;
  top: 630px;
  width: 736px;
  height: 300px;
  padding-top: 6px;
  background: #eeeeee;
  border: 1px solid #a0a0a0;
  color: #2b2b2b;
  font-size: 15.5px;
  box-shadow: 1px 1px 3px rgba(0,0,0,.2);
}
.ctx-i { height: 33px; line-height: 33px; padding-left: 51px; white-space: nowrap; display: flex; align-items: center; }
.ctx-b { font-weight: 700; }
.ctx-more svg { margin-left: auto; margin-right: 16px; }

.tip {
  position: absolute;
  left: 18px;
  top: 898px;
  width: 365px;
  height: 33px;
  padding-left: 12px;
  line-height: 33px;
  background: #f2f2f2;
  box-shadow: 0 0 2px rgba(0,0,0,.25);
  color: #333;
  font-size: 15.5px;
  white-space: nowrap;
}

/* main explorer */
.explorer {
  position: absolute;
  left: 10px;
  top: 0;
  width: 815px;
  height: 960px;
  display: flex;
  flex-direction: column;
  background: #fff;
  box-shadow: 0 2px 10px rgba(0,0,0,.35);
  overflow: hidden;
}
.x-title { height: 45px; flex: none; display: flex; align-items: center; padding-left: 12px; }
.x-sep { width: 1px; height: 22px; background: #bcbcbc; margin-left: 8px; }
.x-chk { margin-left: 19px; }
.x-fold { margin-left: 15px; }
.x-car { margin-left: 15px; }
.x-sep2 { margin-left: 15px; }
.x-name { margin-left: 7px; white-space: nowrap; }
.x-ctl { width: 70px; display: flex; justify-content: center; }
.x-min { margin-left: auto; }
.x-cls { margin-right: 0; }
.x-tabs { height: 34px; flex: none; display: flex; align-items: stretch; position: relative; border-bottom: 1px solid #dadbdc; padding-right: 5px; }
.x-file { width: 85px; background: #0063b1; color: #fff; text-align: center; line-height: 34px; margin-bottom: -1px; }
.x-home { width: 97px; background: #fff; border: 1px solid #dadbdc; border-bottom: 1px solid #fff; text-align: center; line-height: 32px; margin-bottom: -1px; color: #333; }
.x-tab { line-height: 34px; color: #333; white-space: nowrap; }
.x-share { margin-left: 21px; }
.x-view { margin-left: 41px; }
.x-fold-up { margin: 13px 0 0 auto; }
.x-help {
  margin: 5px 0 0 18px; width: 23px; height: 23px; border-radius: 50%; background: #1169bf; color: #fff; font-weight: 700; font-size: 15px; text-align: center; line-height: 23px;
}

.ribbon {
  height: 138px; flex: none; display: flex; padding-top: 4px; background: #f5f6f7; border-bottom: 1px solid #d9d9d9;
}
.rg { display: flex; flex-direction: column; height: 130px; border-right: 1px solid #e2e3e5; flex: none; }
.rbody { flex: 1; display: flex; min-height: 0; }
.rlabel { height: 20px; line-height: 20px; text-align: center; color: #5a6068; white-space: nowrap; }
.rbtn { display: flex; flex-direction: column; align-items: center; text-align: center; line-height: 21px; flex: none; white-space: nowrap; }
.dim { color: #8d8d8d; }
.ric { height: 50px; margin-top: 10px; display: flex; align-items: flex-start; justify-content: center; }
.rg-clip { width: 372px; }
.rb-pin { width: 166px; }
.rb-pin .ric { padding-top: 6px; }
.rb-copy { width: 95px; }
.rb-paste { width: 67px; }
.rsmall { display: flex; flex-direction: column; flex: none; padding-top: 3px; }
.rsmall span { height: 32px; display: flex; align-items: center; }
.rs-clip { width: 34px; align-items: center; }
.rg-org { width: 115px; }
.org { padding-left: 12px; }
.org-col { width: 42px; display: flex; flex-direction: column; padding-top: 8px; gap: 19px; }
.org-col span { display: flex; align-items: center; height: 24px; gap: 2px; }
.org-sep { width: 1px; height: 91px; margin: 7px 10px 0 0; background: #dcdde0; }
.car { width: 0; height: 0; border-left: 4px solid transparent; border-right: 4px solid transparent; display: block; flex: none; }
.gc { border-top: 5px solid #666; }
.dk { border-top: 5px solid #1a1a1a; }
.car-b { margin-top: 7px; }
.rg-hi {
  flex: none; height: 131px; background: #edf2f7; border: 1px solid #c3defa; display: flex; flex-direction: column; align-items: center; line-height: 21px; white-space: nowrap; padding-top: 5px;
}
.hi-box { width: 48px; height: 47px; margin-bottom: 7px; background: #f6f9fc; border: 1px solid #99d1ff; display: flex; align-items: center; justify-content: center; }
.rg-new { width: 64px; margin-left: 2px; }
.rg-open { width: 134px; border-right: 1px solid #e2e3e5; }
.rb-prop { width: 84px; }
.rs-open { margin-left: 2px; padding-top: 3px; }
.rs-open span { height: 33px; gap: 5px; }
.rg-sel { width: 76px; margin-left: 3px; }

.x-nav { height: 60px; flex: none; display: flex; align-items: center; padding-left: 20px; }
.nav-f { margin-left: 25px; }
.nav-d { margin-left: 19px; }
.nav-u { margin-left: 17px; }
.addr {
  width: 408px; height: 46px; margin-left: 10px; border: 1px solid #d9d9d9; display: flex; align-items: center; padding-left: 4px; white-space: nowrap; flex: none;
}
.a-gt { margin-left: 11px; }
.a-cr { margin-left: 11px; }
.a-c1 { width: 53px; }
.a-dd { margin-left: auto; margin-right: 15px; }
.a-ref { width: 48px; height: 44px; border-left: 1px solid #d9d9d9; display: flex; align-items: center; justify-content: center; flex: none; }
.srch {
  width: 223px; height: 46px; margin-left: 12px; border: 1px solid #d9d9d9; display: flex; align-items: center; padding-left: 21px; gap: 12px; color: #6d6d6d; white-space: nowrap; overflow: hidden; flex: none;
}

.x-body { flex: 1; min-height: 0; display: flex; }
.side { width: 197px; flex: none; overflow: hidden; }
.nrow { height: 36px; display: flex; align-items: center; padding-left: 52px; white-space: nowrap; overflow: hidden; color: #1e1e1e; }
.ni { margin-right: 8px; width: 18px; }
.ni-ok { width: 24px; margin-left: -6px; }
.npin { margin-left: auto; margin-right: 6px; }
.nrow-od { margin-top: 12px; padding-left: 27px; }
.nrow-od .ni { width: 34px; margin-right: 5px; }
.nrow-pc { margin-top: 12px; padding-left: 38px; }
.nrow-pc .ni { width: 24px; margin-right: 4px; }
.nrow-sel { background: #d9d9d9; margin-right: 1px; }
.nrow-sel .ni { width: 22px; margin-left: -2px; margin-right: 6px; }
.vbar { width: 24px; flex: none; background: #f0f0f0; display: flex; flex-direction: column; }
.vb-top { height: 80px; display: flex; justify-content: center; padding-top: 11px; }
.vb-thumb { height: 410px; background: #cdcdcd; }
.vb-low { flex: 1; display: flex; justify-content: center; align-items: flex-end; padding-bottom: 9px; }
.splitter { width: 4px; flex: none; background: #f4f4f4; }
.files {
  flex: 1; display: grid; grid-template-columns: repeat(3, 158px); grid-auto-rows: 177px; column-gap: 30px; row-gap: 2px; padding: 9px 0 0 25px; align-content: start;
}
.tile { display: flex; flex-direction: column; align-items: center; border: 1px solid transparent; padding-top: 18px; text-align: center; line-height: 25px; color: #1e1e1e; }
.tile svg { margin-right: 5px; margin-bottom: 10px; }
.tile-sel { border-color: #99d1ff; }
.x-stat { height: 35px; flex: none; display: flex; align-items: center; padding-left: 23px; }
.x-stat .view-plain { margin-left: auto; }
.x-stat .view-on { margin-left: 6px; margin-right: 8px; }

/* taskbar */
.taskbar {
  display: flex;
  align-items: stretch;
  background: linear-gradient(90deg, #cfe6ef 0%, #d1e3ed 50%, #d5deec 100%);
}
.start { width: 73px; display: flex; align-items: center; justify-content: center; padding-right: 1px; flex: none; }
.tsearch {
  width: 430px; margin-top: 1px; margin-bottom: 1px; border: 2px solid #c9c9c9; background: #fff; display: flex; align-items: center; padding-left: 15px; flex: none; font-size: 21px; color: #222;
}
.tsearch span { margin-left: 18px; }
.taskview { width: 76px; display: flex; align-items: center; justify-content: center; flex: none; }
.apps { margin-left: 8px; display: flex; gap: 14px; flex: none; }
.app { width: 61px; display: flex; align-items: center; justify-content: center; border-bottom: 4px solid #0a7fd0; padding-top: 4px; flex: none; }
.app:nth-child(-n+2) { border-bottom-color: transparent; }
.app-on { width: 68px; margin: 0 -1px 0 -6px; background: #eef4f8; }
.term { width: 32px; height: 32px; background: #4b2d8c; border: 2px solid #9a9aa6; color: #e2e2e2; font-size: 9px; line-height: 12px; padding-left: 2px; display: block; }
.tray { margin-left: auto; display: flex; align-items: center; flex: none; height: 100%; }
.tr { display: flex; align-items: center; justify-content: center; flex: none; }
.tr-up { width: 36px; }
.tr-cam { width: 37px; }
.tr-cld { width: 35px; }
.tr-bat { width: 36px; }
.tr-wifi { width: 37px; }
.tr-snd { width: 33px; }
.tr-lang { width: 58px; font-size: 16px; color: #222; }
.clock { width: 104px; display: flex; flex-direction: column; align-items: center; font-size: 16px; line-height: 28px; color: #222; }
.tr-chat { width: 64px; position: relative; }
.badge {
  position: absolute; left: 30px; top: 11px; width: 24px; height: 24px; border-radius: 50%; background: #d0d0d0; border: 1px solid #555; color: #111; text-align: center; line-height: 22px; font-size: 15px;
}
.tr-end { width: 18px; height: 100%; border-left: 2px solid #c0ccd8; margin-left: 11px; flex: none; margin-right: 0; width: 7px; }
```
